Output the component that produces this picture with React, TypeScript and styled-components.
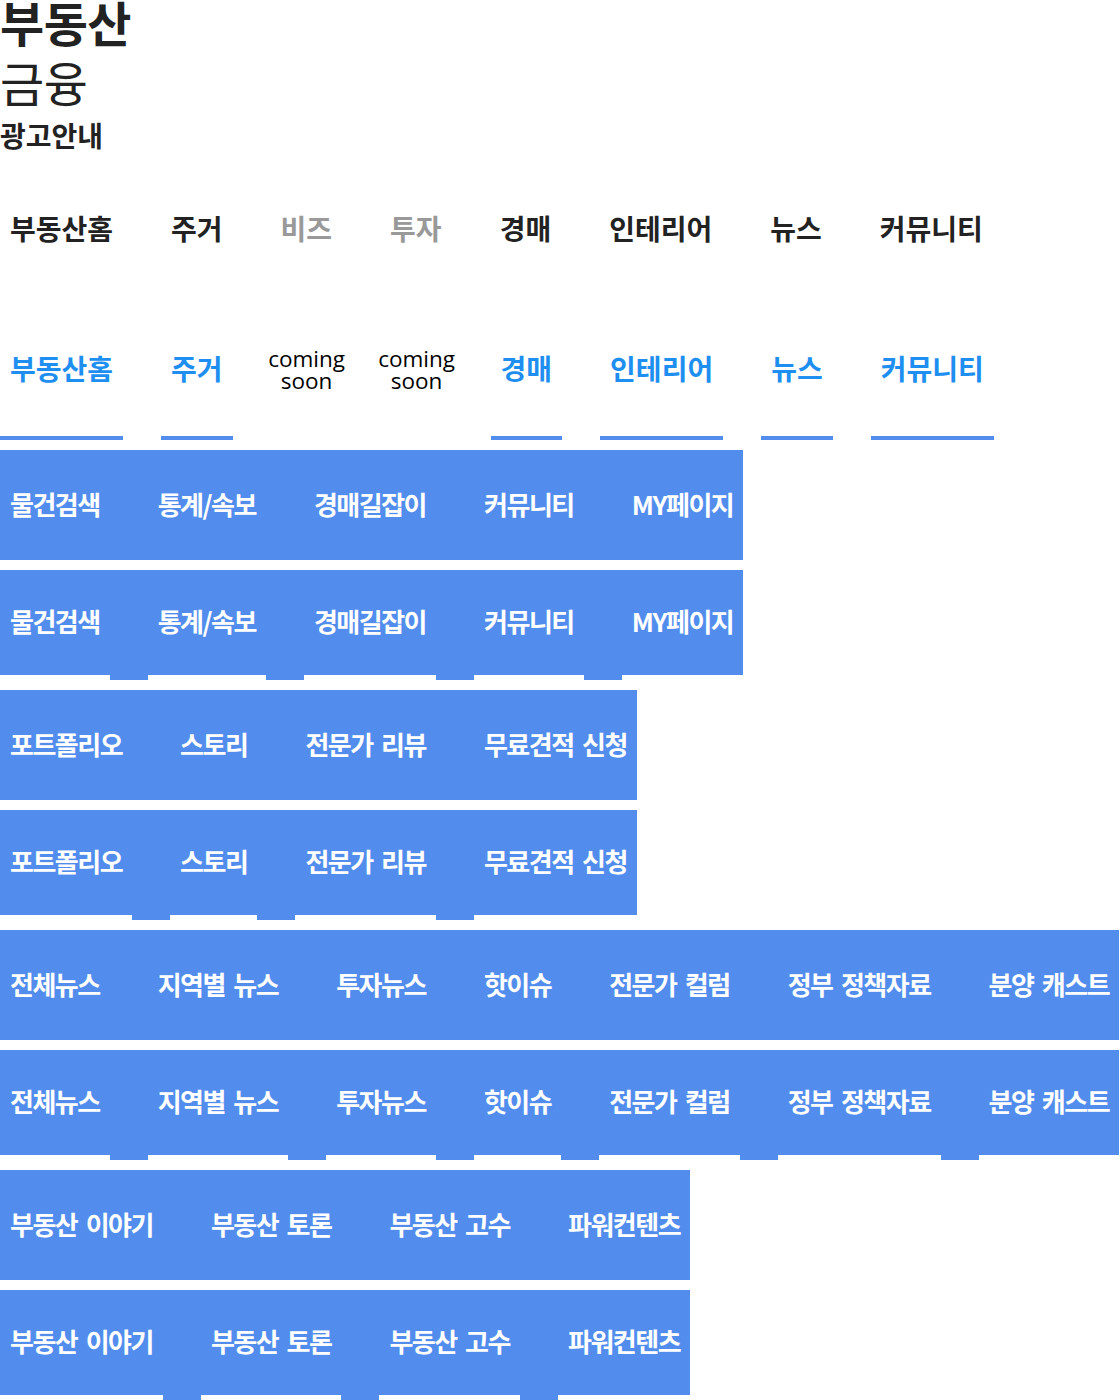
import React from 'react';
import styled, { createGlobalStyle } from 'styled-components';

const GlobalStyle = createGlobalStyle`
  body {
    margin: 0;
    background: #ffffff;
    font-family: "Noto Sans CJK KR", "Noto Sans", sans-serif;
  }
`;

type Tone = 'dark' | 'muted' | 'blue';

type NavEntry = { label: string; tone: Tone; soon?: boolean };

const topNav: NavEntry[] = [
  { label: '부동산홈', tone: 'dark' },
  { label: '주거', tone: 'dark' },
  { label: '비즈', tone: 'muted' },
  { label: '투자', tone: 'muted' },
  { label: '경매', tone: 'dark' },
  { label: '인테리어', tone: 'dark' },
  { label: '뉴스', tone: 'dark' },
  { label: '커뮤니티', tone: 'dark' },
];

const activeNav: NavEntry[] = [
  { label: '부동산홈', tone: 'blue' },
  { label: '주거', tone: 'blue' },
  { label: '비즈', tone: 'blue', soon: true },
  { label: '투자', tone: 'blue', soon: true },
  { label: '경매', tone: 'blue' },
  { label: '인테리어', tone: 'blue' },
  { label: '뉴스', tone: 'blue' },
  { label: '커뮤니티', tone: 'blue' },
];

const subMenus: string[][] = [
  ['물건검색', '통계/속보', '경매길잡이', '커뮤니티', 'MY페이지'],
  ['포트폴리오', '스토리', '전문가 리뷰', '무료견적 신청'],
  ['전체뉴스', '지역별 뉴스', '투자뉴스', '핫이슈', '전문가 컬럼', '정부 정책자료', '분양 캐스트'],
  ['부동산 이야기', '부동산 토론', '부동산 고수', '파워컨텐츠'],
];

const toneColor: Record<Tone, string> = {
  dark: '#222222',
  muted: '#999999',
  blue: '#1e8ff0',
};

const Brand = styled.header`
  display: flex;
  flex-direction: column;
  height: 160px;
  color: #222222;
`;

const Title = styled.h1`
  margin: 0;
  font-size: 48px;
  font-weight: 700;
  line-height: 42px;
  letter-spacing: -0.5px;
`;

const SubTitle = styled.div`
  font-size: 48px;
  font-weight: 400;
  line-height: 78px;
  letter-spacing: -0.5px;
`;

const AdLink = styled.div`
  font-size: 28px;
  font-weight: 700;
  line-height: 30px;
  letter-spacing: 0;
`;

const Nav = styled.nav`
  display: flex;
  gap: 38px;
  height: 140px;
`;

const NavItem = styled.a<{ $tone: Tone; $underline: boolean }>`
  display: flex;
  align-items: center;
  justify-content: center;
  box-sizing: border-box;
  padding: 0 10px;
  font-size: 28px;
  font-weight: 700;
  letter-spacing: 0;
  white-space: nowrap;
  color: ${(p) => toneColor[p.$tone]};
  border-bottom: 4px solid ${(p) => (p.$underline ? '#528dee' : 'transparent')};
`;

const ComingSoon = styled.span`
  display: flex;
  justify-content: center;
  width: 52px;
  padding-top: 4px;
  font-family: "Open Sans", "Noto Sans", sans-serif;
  font-size: 22.5px;
  font-weight: 400;
  line-height: 22px;
  text-align: center;
  color: #000000;
  white-space: nowrap;
`;

const Bar = styled.div`
  display: flex;
  align-items: flex-start;
  width: max-content;
  height: 110px;
  margin-top: 10px;
`;

const BarItem = styled.a<{ $tabs: boolean }>`
  display: flex;
  align-items: center;
  box-sizing: border-box;
  height: ${(p) => (p.$tabs ? 105 : 110)}px;
  padding: 0 10px 4px;
  background: #528dee;
  color: #ffffff;
  font-size: 26px;
  font-weight: 700;
  letter-spacing: -1.5px;
  word-spacing: 4px;
  white-space: nowrap;
`;

const BarGap = styled.span`
  width: 38px;
  height: 110px;
  background: #528dee;
`;

const NavRow = ({ items }: { items: NavEntry[] }) => (
  <Nav>
    {items.map((it) => (
      <NavItem key={it.label} $tone={it.tone} $underline={it.tone === 'blue' && !it.soon}>
        {it.soon ? (
          <ComingSoon>
            coming
            <br />
            soon
          </ComingSoon>
        ) : (
          it.label
        )}
      </NavItem>
    ))}
  </Nav>
);

const SubBar = ({ items, tabs }: { items: string[]; tabs: boolean }) => (
  <Bar>
    {items.map((label, i) => (
      <React.Fragment key={label}>
        {i > 0 && <BarGap />}
        <BarItem $tabs={tabs}>{label}</BarItem>
      </React.Fragment>
    ))}
  </Bar>
);

export default function App() {
  return (
    <>
      <GlobalStyle />
      <Brand>
        <Title>부동산</Title>
        <SubTitle>금융</SubTitle>
        <AdLink>광고안내</AdLink>
      </Brand>
      <NavRow items={topNav} />
      <NavRow items={activeNav} />
      {subMenus.map((menu) => (
        <React.Fragment key={menu[0]}>
          <SubBar items={menu} tabs={false} />
          <SubBar items={menu} tabs />
        </React.Fragment>
      ))}
    </>
  );
}
